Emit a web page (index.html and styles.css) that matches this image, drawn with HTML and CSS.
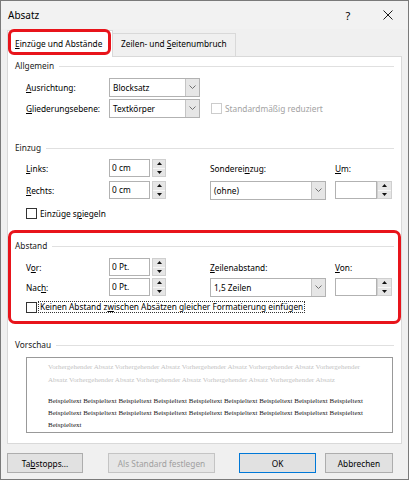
FILE: index.html
```html
<!DOCTYPE html>
<html lang="de">
<head>
<meta charset="utf-8">
<title>Absatz</title>
<link rel="stylesheet" href="styles.css">
</head>
<body>
<div class="dialog">
  <div class="titlebar">
    <span class="title">Absatz</span>
    <span class="help">?</span>
    <svg class="close" width="10" height="10" viewBox="0 0 10 10"><path d="M0.5 0.5L9.5 9.5M9.5 0.5L0.5 9.5" stroke="#1a1a1a" stroke-width="1" fill="none"/></svg>
  </div>
  <div class="tabs">
    <div class="tab active"><u>E</u>inzüge und Abstände</div>
    <div class="tab">Zeilen- und <u>S</u>eitenumbruch</div>
  </div>
  <div class="panel">
    <section class="group g-general">
      <div class="legend"><span>Allgemein</span><i class="rule"></i></div>
      <div class="grid gap1">
        <span class="lbl"><u>A</u>usrichtung:</span>
        <div class="combo w-sel"><span class="val">Blocksatz</span><span class="arrow"><svg width="7" height="4" viewBox="0 0 7 4"><path d="M0.5 0.5L3.5 3.5L6.5 0.5" fill="none" stroke="#707070"/></svg></span></div>
        <span></span><span></span>
        <span class="lbl"><u>G</u>liederungsebene:</span>
        <div class="combo w-sel"><span class="val">Textkörper</span><span class="arrow"><svg width="7" height="4" viewBox="0 0 7 4"><path d="M0.5 0.5L3.5 3.5L6.5 0.5" fill="none" stroke="#707070"/></svg></span></div>
        <div class="check disabled span2"><span class="box"></span><span class="ctext">Standardmäßig reduziert</span></div>
      </div>
    </section>

    <section class="group g-indent">
      <div class="legend"><span>Einzug</span><i class="rule"></i></div>
      <div class="grid gap2">
        <span class="lbl"><u>L</u>inks:</span>
        <div class="spin"><div class="field">0 cm</div><div class="spinner"><span class="sb"><svg width="5" height="3" viewBox="0 0 5 3"><path d="M2.5 0L5 3H0z"/></svg></span><span class="sb"><svg width="5" height="3" viewBox="0 0 5 3"><path d="M0 0H5L2.5 3z"/></svg></span></div></div>
        <span class="lbl">Sonderei<u>n</u>zug:</span>
        <span class="lbl"><u>U</u>m:</span>
        <span class="lbl"><u>R</u>echts:</span>
        <div class="spin"><div class="field">0 cm</div><div class="spinner"><span class="sb"><svg width="5" height="3" viewBox="0 0 5 3"><path d="M2.5 0L5 3H0z"/></svg></span><span class="sb"><svg width="5" height="3" viewBox="0 0 5 3"><path d="M0 0H5L2.5 3z"/></svg></span></div></div>
        <div class="combo w-wide"><span class="val">(ohne)</span><span class="arrow"><svg width="7" height="4" viewBox="0 0 7 4"><path d="M0.5 0.5L3.5 3.5L6.5 0.5" fill="none" stroke="#707070"/></svg></span></div>
        <div class="spin joined"><div class="field"></div><div class="spinner"><span class="sb"><svg width="5" height="3" viewBox="0 0 5 3"><path d="M2.5 0L5 3H0z"/></svg></span><span class="sb"><svg width="5" height="3" viewBox="0 0 5 3"><path d="M0 0H5L2.5 3z"/></svg></span></div></div>
      </div>
      <div class="check row-check"><span class="box"></span><span class="ctext">Einzüge s<u>p</u>iegeln</span></div>
    </section>

    <section class="group g-spacing">
      <div class="legend"><span>Abstand</span><i class="rule"></i></div>
      <div class="grid gap0">
        <span class="lbl">V<u>o</u>r:</span>
        <div class="spin"><div class="field">0 Pt.</div><div class="spinner"><span class="sb"><svg width="5" height="3" viewBox="0 0 5 3"><path d="M2.5 0L5 3H0z"/></svg></span><span class="sb"><svg width="5" height="3" viewBox="0 0 5 3"><path d="M0 0H5L2.5 3z"/></svg></span></div></div>
        <span class="lbl"><u>Z</u>eilenabstand:</span>
        <span class="lbl"><u>V</u>on:</span>
        <span class="lbl">Nac<u>h</u>:</span>
        <div class="spin"><div class="field">0 Pt.</div><div class="spinner"><span class="sb"><svg width="5" height="3" viewBox="0 0 5 3"><path d="M2.5 0L5 3H0z"/></svg></span><span class="sb"><svg width="5" height="3" viewBox="0 0 5 3"><path d="M0 0H5L2.5 3z"/></svg></span></div></div>
        <div class="combo w-wide"><span class="val">1,5 Zeilen</span><span class="arrow"><svg width="7" height="4" viewBox="0 0 7 4"><path d="M0.5 0.5L3.5 3.5L6.5 0.5" fill="none" stroke="#707070"/></svg></span></div>
        <div class="spin joined"><div class="field"></div><div class="spinner"><span class="sb"><svg width="5" height="3" viewBox="0 0 5 3"><path d="M2.5 0L5 3H0z"/></svg></span><span class="sb"><svg width="5" height="3" viewBox="0 0 5 3"><path d="M0 0H5L2.5 3z"/></svg></span></div></div>
      </div>
      <div class="check row-check2"><span class="box"></span><span class="ctext focus">Keinen Abstand z<u>w</u>ischen Absätzen gleicher Formatierung einfügen</span></div>
    </section>

    <section class="group g-preview">
      <div class="legend"><span>Vorschau</span><i class="rule"></i></div>
      <div class="preview">
        <p class="prev">Vorhergehender Absatz Vorhergehender Absatz Vorhergehender Absatz Vorhergehender Absatz Vorhergehender Absatz Vorhergehender Absatz Vorhergehender Absatz Vorhergehender Absatz Vorhergehender Absatz</p>
        <p class="sample">Beispieltext Beispieltext Beispieltext Beispieltext Beispieltext Beispieltext Beispieltext Beispieltext Beispieltext Beispieltext Beispieltext Beispieltext Beispieltext Beispieltext Beispieltext Beispieltext Beispieltext Beispieltext Beispieltext</p>
      </div>
    </section>
  </div>
  <div class="btnrow">
    <button class="btn b-tabs">Ta<u>b</u>stopps...</button>
    <button class="btn b-std" disabled>Als Standard festlegen</button>
    <button class="btn b-ok">OK</button>
    <button class="btn b-cancel">Abbrechen</button>
  </div>
</div>
</body>
</html>
```
FILE: styles.css
```css
* { box-sizing: border-box; }
html, body { margin: 0; padding: 0; }
body {
  width: 409px;
  height: 480px;
  overflow: hidden;
  background: #f0f0f0;
  font-family: "Noto Sans", "Open Sans", sans-serif;
  font-size: 8.3px;
  color: #000;
}
u { text-decoration: underline; text-underline-offset: 1px; text-decoration-thickness: 1px; }

.dialog {
  width: 409px;
  height: 480px;
  border: 1px solid #7a7a7a;
  background: #f0f0f0;
  display: flex;
  flex-direction: column;
}

.titlebar {
  height: 28px;
  display: flex;
  align-items: center;
  padding-left: 7px;
  background: #f2f2f2;
}
.title { flex: 1; font-size: 10px; }
.help { width: 10px; text-align: center; font-size: 11px; margin-right: 30px; }
.close { margin-right: 15px; display: block; }

.tabs {
  height: 28px;
  display: flex;
  align-items: flex-end;
  padding-left: 6px;
  margin-bottom: -1px;
  position: relative;
  z-index: 1;
}
.tab {
  border: 1px solid #d9d9d9;
  border-bottom: none;
  line-height: 14px;
  white-space: nowrap;
}
.tab.active {
  position: relative;
  width: 106px;
  height: 27px;
  background: #fff;
  padding: 6px 0 0 7px;
}
.tab.active::after {
  content: "";
  position: absolute;
  top: -2px;
  left: 0;
  right: 1px;
  bottom: 2px;
  border: 3px solid #e8141b;
  border-radius: 6px;
}
.tab:not(.active) {
  width: 123px;
  height: 23px;
  margin-bottom: 1px;
  background: #f0f0f0;
  padding: 3px 0 0 8px;
  border-left: none;
}

.panel {
  margin: 0 6px;
  height: 388px;
  background: #fff;
  border: 1px solid #d9d9d9;
  padding: 2px 7px 0 7px;
}

.legend {
  display: flex;
  align-items: center;
  height: 14px;
  line-height: 14px;
  color: #1a1a1a;
}
.rule {
  flex: 1;
  height: 1px;
  background: #e0e0e0;
  margin-left: 5px;
}

.grid {
  display: grid;
  grid-template-columns: 83px 101px 125px 57px;
  grid-auto-rows: 20px;
  align-items: center;
  padding-left: 11px;
  margin-top: 4px;
}
.gap0 { row-gap: 0; }
.gap1 { row-gap: 1px; }
.gap2 { row-gap: 2px; margin-top: 3px; }
.span2 { grid-column: span 2; }
.lbl { white-space: nowrap; }

.combo {
  display: flex;
  height: 19px;
  border: 1px solid #b2b2b2;
  background: #fff;
}
.combo .val { flex: 1; padding-left: 3px; line-height: 17px; }
.combo .arrow {
  width: 14px;
  background: #e6e6e6;
  border-left: 1px solid #c4c4c4;
  display: flex;
  align-items: center;
  justify-content: center;
}
.combo .arrow svg { display: block; }
.w-sel { width: 91px; }
.w-wide { width: 116px; }

.spin { display: flex; height: 18px; }
.spin .field {
  width: 41px;
  border: 1px solid #b2b2b2;
  background: #fff;
  padding-left: 2px;
  line-height: 16px;
}
.spinner {
  width: 14px;
  margin-left: 2px;
  display: flex;
  flex-direction: column;
  border: 1px solid #cfcfcf;
  background: #e6e6e6;
}
.spin.joined .field { width: 43px; }
.spin.joined .spinner { margin-left: 0; width: 15px; }
.sb {
  flex: 1;
  display: flex;
  align-items: center;
  justify-content: center;
}
.sb + .sb { border-top: 1px solid #f7f7f7; }
.sb svg { display: block; fill: #111; }

.check { display: flex; align-items: center; height: 20px; }
.check .box {
  width: 11px;
  height: 11px;
  border: 1px solid #333;
  background: #fff;
  flex: none;
}
.check .ctext { margin-left: 3px; white-space: nowrap; }
.check.disabled { padding-left: 1px; }
.check.disabled .box { border-color: #cccccc; }
.check.disabled .ctext { color: #a3a3a3; }
.row-check { padding-left: 11px; margin-top: 3px; }
.row-check2 { padding-left: 11px; }
.ctext.focus {
  margin-left: 2px;
  padding: 0 1px;
  line-height: 10px;
  outline: 1px dotted #333;
}

.g-indent { margin-top: 23px; }
.g-spacing {
  position: relative;
  margin-top: 9px;
  padding: 7px 0 5px;
}
.g-spacing::after {
  content: "";
  position: absolute;
  top: -2px;
  bottom: -2px;
  left: -7px;
  right: -7px;
  border: 3px solid #e8141b;
  border-radius: 7px;
}
.g-preview { margin-top: 16px; }

.preview {
  margin: 5px 0 0 11px;
  width: 367px;
  height: 76px;
  border: 1px solid #999;
  background: #fff;
  padding: 3px 17px 0 21px;
  font-family: "Liberation Serif", "Times New Roman", serif;
  font-size: 7px;
  overflow: hidden;
}
.preview p { margin: 0; }
.prev { color: #c3c3c3; line-height: 13px; }
.sample { color: #1a1a1a; line-height: 12px; margin-top: 8px !important; }

.btnrow {
  display: flex;
  padding-left: 6px;
  margin-top: 9px;
}
.btn {
  height: 20px;
  padding: 0;
  font: inherit;
  color: #000;
  background: #e1e1e1;
  border: 1px solid #adadad;
}
.b-tabs { width: 76px; }
.b-std { width: 107px; margin-left: 25px; color: #a0a0a0; background: #e6e6e6; border-color: #c4c4c4; }
.b-ok { width: 77px; margin-left: 24px; border-color: #0078d7; }
.b-cancel { width: 68px; margin-left: 9px; }
```
